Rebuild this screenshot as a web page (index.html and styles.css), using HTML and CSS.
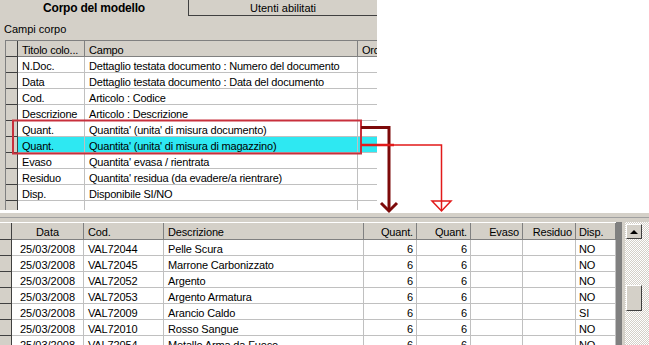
FILE: index.html
```html
<!DOCTYPE html>
<html lang="it">
<head>
    <meta charset="UTF-8">
    <title>Corpo del modello</title>
    <link rel="stylesheet" href="styles.css">
</head>
<body>
    <div class="page">
        <div class="top">
            <div class="panel">
                <div class="tabs">
                    <div class="tab active">Corpo del modello</div>
                    <div class="tab">Utenti abilitati</div>
                </div>
                <div class="caption">Campi corpo</div>
                <div class="fields">
                    <div class="frow head">
                        <div class="ind"></div>
                        <div class="c">Titolo colo...</div>
                        <div class="c">Campo</div>
                        <div class="c">Ordine</div>
                    </div>
                    <div class="frow"><div class="ind"></div><div class="c">N.Doc.</div><div class="c">Dettaglio testata documento : Numero del documento</div><div class="c"></div></div>
                    <div class="frow"><div class="ind"></div><div class="c">Data</div><div class="c">Dettaglio testata documento : Data del documento</div><div class="c"></div></div>
                    <div class="frow"><div class="ind"></div><div class="c">Cod.</div><div class="c">Articolo : Codice</div><div class="c"></div></div>
                    <div class="frow"><div class="ind"></div><div class="c">Descrizione</div><div class="c">Articolo : Descrizione</div><div class="c"></div></div>
                    <div class="frow"><div class="ind"></div><div class="c">Quant.</div><div class="c">Quantita' (unita' di misura documento)</div><div class="c"></div></div>
                    <div class="frow sel"><div class="ind"></div><div class="c">Quant.</div><div class="c">Quantita' (unita' di misura di magazzino)</div><div class="c"></div></div>
                    <div class="frow"><div class="ind"></div><div class="c">Evaso</div><div class="c">Quantita' evasa / rientrata</div><div class="c"></div></div>
                    <div class="frow"><div class="ind"></div><div class="c">Residuo</div><div class="c">Quantita' residua (da evadere/a rientrare)</div><div class="c"></div></div>
                    <div class="frow"><div class="ind"></div><div class="c">Disp.</div><div class="c">Disponibile SI/NO</div><div class="c"></div></div>
                    <div class="frow"><div class="ind"></div><div class="c"></div><div class="c"></div><div class="c"></div></div>
                </div>
            </div>
        </div>

        <div class="bottom">
            <div class="band"></div>
            <div class="win">
                <div class="rows">
                    <div class="rrow head">
                        <div class="ind"></div>
                        <div class="c mid">Data</div>
                        <div class="c">Cod.</div>
                        <div class="c">Descrizione</div>
                        <div class="c num">Quant.</div>
                        <div class="c num">Quant.</div>
                        <div class="c num">Evaso</div>
                        <div class="c num">Residuo</div>
                        <div class="c tight">Disp.</div>
                    </div>
                    <div class="rrow"><div class="ind"></div><div class="c mid">25/03/2008</div><div class="c">VAL72044</div><div class="c">Pelle Scura</div><div class="c num">6</div><div class="c num">6</div><div class="c num"></div><div class="c num"></div><div class="c tight">NO</div></div>
                    <div class="rrow"><div class="ind"></div><div class="c mid">25/03/2008</div><div class="c">VAL72045</div><div class="c">Marrone Carbonizzato</div><div class="c num">6</div><div class="c num">6</div><div class="c num"></div><div class="c num"></div><div class="c tight">NO</div></div>
                    <div class="rrow"><div class="ind"></div><div class="c mid">25/03/2008</div><div class="c">VAL72052</div><div class="c">Argento</div><div class="c num">6</div><div class="c num">6</div><div class="c num"></div><div class="c num"></div><div class="c tight">NO</div></div>
                    <div class="rrow"><div class="ind"></div><div class="c mid">25/03/2008</div><div class="c">VAL72053</div><div class="c">Argento Armatura</div><div class="c num">6</div><div class="c num">6</div><div class="c num"></div><div class="c num"></div><div class="c tight">NO</div></div>
                    <div class="rrow"><div class="ind"></div><div class="c mid">25/03/2008</div><div class="c">VAL72009</div><div class="c">Arancio Caldo</div><div class="c num">6</div><div class="c num">6</div><div class="c num"></div><div class="c num"></div><div class="c tight">SI</div></div>
                    <div class="rrow"><div class="ind"></div><div class="c mid">25/03/2008</div><div class="c">VAL72010</div><div class="c">Rosso Sangue</div><div class="c num">6</div><div class="c num">6</div><div class="c num"></div><div class="c num"></div><div class="c tight">NO</div></div>
                    <div class="rrow"><div class="ind"></div><div class="c mid">25/03/2008</div><div class="c">VAL72054</div><div class="c">Metallo Arma da Fuoco</div><div class="c num">6</div><div class="c num">6</div><div class="c num"></div><div class="c num"></div><div class="c tight">NO</div></div>
                </div>
                <div class="split"></div>
                <div class="scroll">
                    <div class="sbtn"><span class="up"></span></div>
                    <div class="thumb"></div>
                </div>
            </div>
        </div>

        <!-- annotazioni disegnate sopra lo screenshot -->
        <svg class="notes" width="649" height="345" viewBox="0 0 649 345">
            <rect x="13" y="120.5" width="348" height="33" fill="none" stroke="#c8303c" stroke-width="2"/>
            <polyline points="361,127.5 389,127.5 389,211" fill="none" stroke="#7d0a0a" stroke-width="3"/>
            <polyline points="381,203 389,211 397,203" fill="none" stroke="#7d0a0a" stroke-width="3"/>
            <polyline points="361,145 441.5,145 441.5,210" fill="none" stroke="#e21a1a" stroke-width="1.5"/>
            <line x1="361" y1="145" x2="394" y2="145" stroke="#e21a1a" stroke-width="2.5"/>
            <polygon points="432,201 451,201 441.5,211" fill="none" stroke="#e21a1a" stroke-width="1.5"/>
        </svg>
    </div>
</body>
</html>
```

FILE: styles.css
```css
body {
    margin: 0;
    font-family: "Liberation Sans", Arial, sans-serif;
    font-size: 11px;
    color: #000;
    background: #fff;
}
.page {
    position: relative;
    width: 649px;
    height: 345px;
    overflow: hidden;
}
.top {
    height: 210px;
}
.panel {
    width: 377px;
    height: 210px;
    background: #d4d0c8;
    overflow: hidden;
}
.tabs {
    display: flex;
    height: 16px;
}
.tab {
    box-sizing: border-box;
    height: 16px;
    line-height: 16px;
    text-align: center;
}
.tab.active {
    width: 188px;
    font-size: 12px;
    font-weight: bold;
    letter-spacing: -0.2px;
}
.tab:not(.active) {
    width: 189px;
    border-left: 1px solid #404040;
    border-bottom: 1px solid #404040;
}
.caption {
    padding: 6px 0 0 4px;
    height: 18px;
    line-height: 14px;
}
.fields {
    margin-left: 5px;
    width: 400px;
    border-top: 1px solid #808080;
    border-left: 1px solid #808080;
    letter-spacing: -0.2px;
}
.frow {
    display: grid;
    grid-template-columns: 12px 67px 273px 48px;
    height: 16px;
    background: #fff;
}
.frow .c,
.rrow .c {
    box-sizing: border-box;
    border-right: 1px solid #c0c0c0;
    border-bottom: 1px solid #c0c0c0;
    padding: 2px 0 0 4px;
    line-height: 14px;
    white-space: nowrap;
    overflow: hidden;
}
.ind {
    box-sizing: border-box;
    background: #d4d0c8;
    border-right: 1px solid #404040;
    border-bottom: 1px solid #404040;
}
.frow.head {
    background: #d4d0c8;
}
.head .c {
    border-right-color: #808080;
    border-bottom-color: #808080;
}
.frow.sel {
    background: #2ee8f2;
}

.bottom {
    height: 135px;
}
.band {
    height: 4px;
    margin-top: 3px;
    background: #d4d0c8;
    border-bottom: 1px solid #a0a0a0;
}
.win {
    display: flex;
    height: 130px;
    background: #d4d0c8;
}
.rows {
    width: 616px;
    padding-top: 4px;
}
.rrow {
    display: grid;
    grid-template-columns: 12px 72px 80px 200px 53px 54px 52px 53px 40px;
    height: 16px;
    background: #fff;
}
.rrow .c {
    letter-spacing: -0.15px;
}
.rrow.head {
    height: 18px;
    background: #d4d0c8;
    border-top: 1px solid #fff;
    box-sizing: border-box;
}
.rrow.head .c {
    padding-top: 2px;
}
.rrow .mid {
    text-align: center;
    padding-left: 0;
    letter-spacing: 0;
}
.rrow .num {
    text-align: right;
    padding-right: 3px;
    padding-left: 0;
}
.rrow .tight {
    padding-left: 3px;
}
.split {
    width: 6px;
    margin-top: 4px;
    background: #808080;
    border-right: 3px solid #d4d0c8;
}
.scroll {
    width: 24px;
    margin-top: 4px;
    background: repeating-conic-gradient(#fff 0 25%, #d4d0c8 0 50%) 0 0 / 2px 2px;
}
.sbtn,
.thumb {
    box-sizing: border-box;
    width: 16px;
    margin-left: 1px;
    background: #d4d0c8;
    border: 1px solid;
    border-color: #fff #404040 #404040 #fff;
}
.sbtn {
    height: 15px;
    margin-top: 2px;
    display: flex;
    align-items: center;
    justify-content: center;
}
.up {
    width: 0;
    height: 0;
    border-left: 4px solid transparent;
    border-right: 4px solid transparent;
    border-bottom: 4px solid #000;
}
.thumb {
    height: 26px;
    margin-top: 46px;
}
.notes {
    position: absolute;
    left: 0;
    top: 0;
    pointer-events: none;
}
```
